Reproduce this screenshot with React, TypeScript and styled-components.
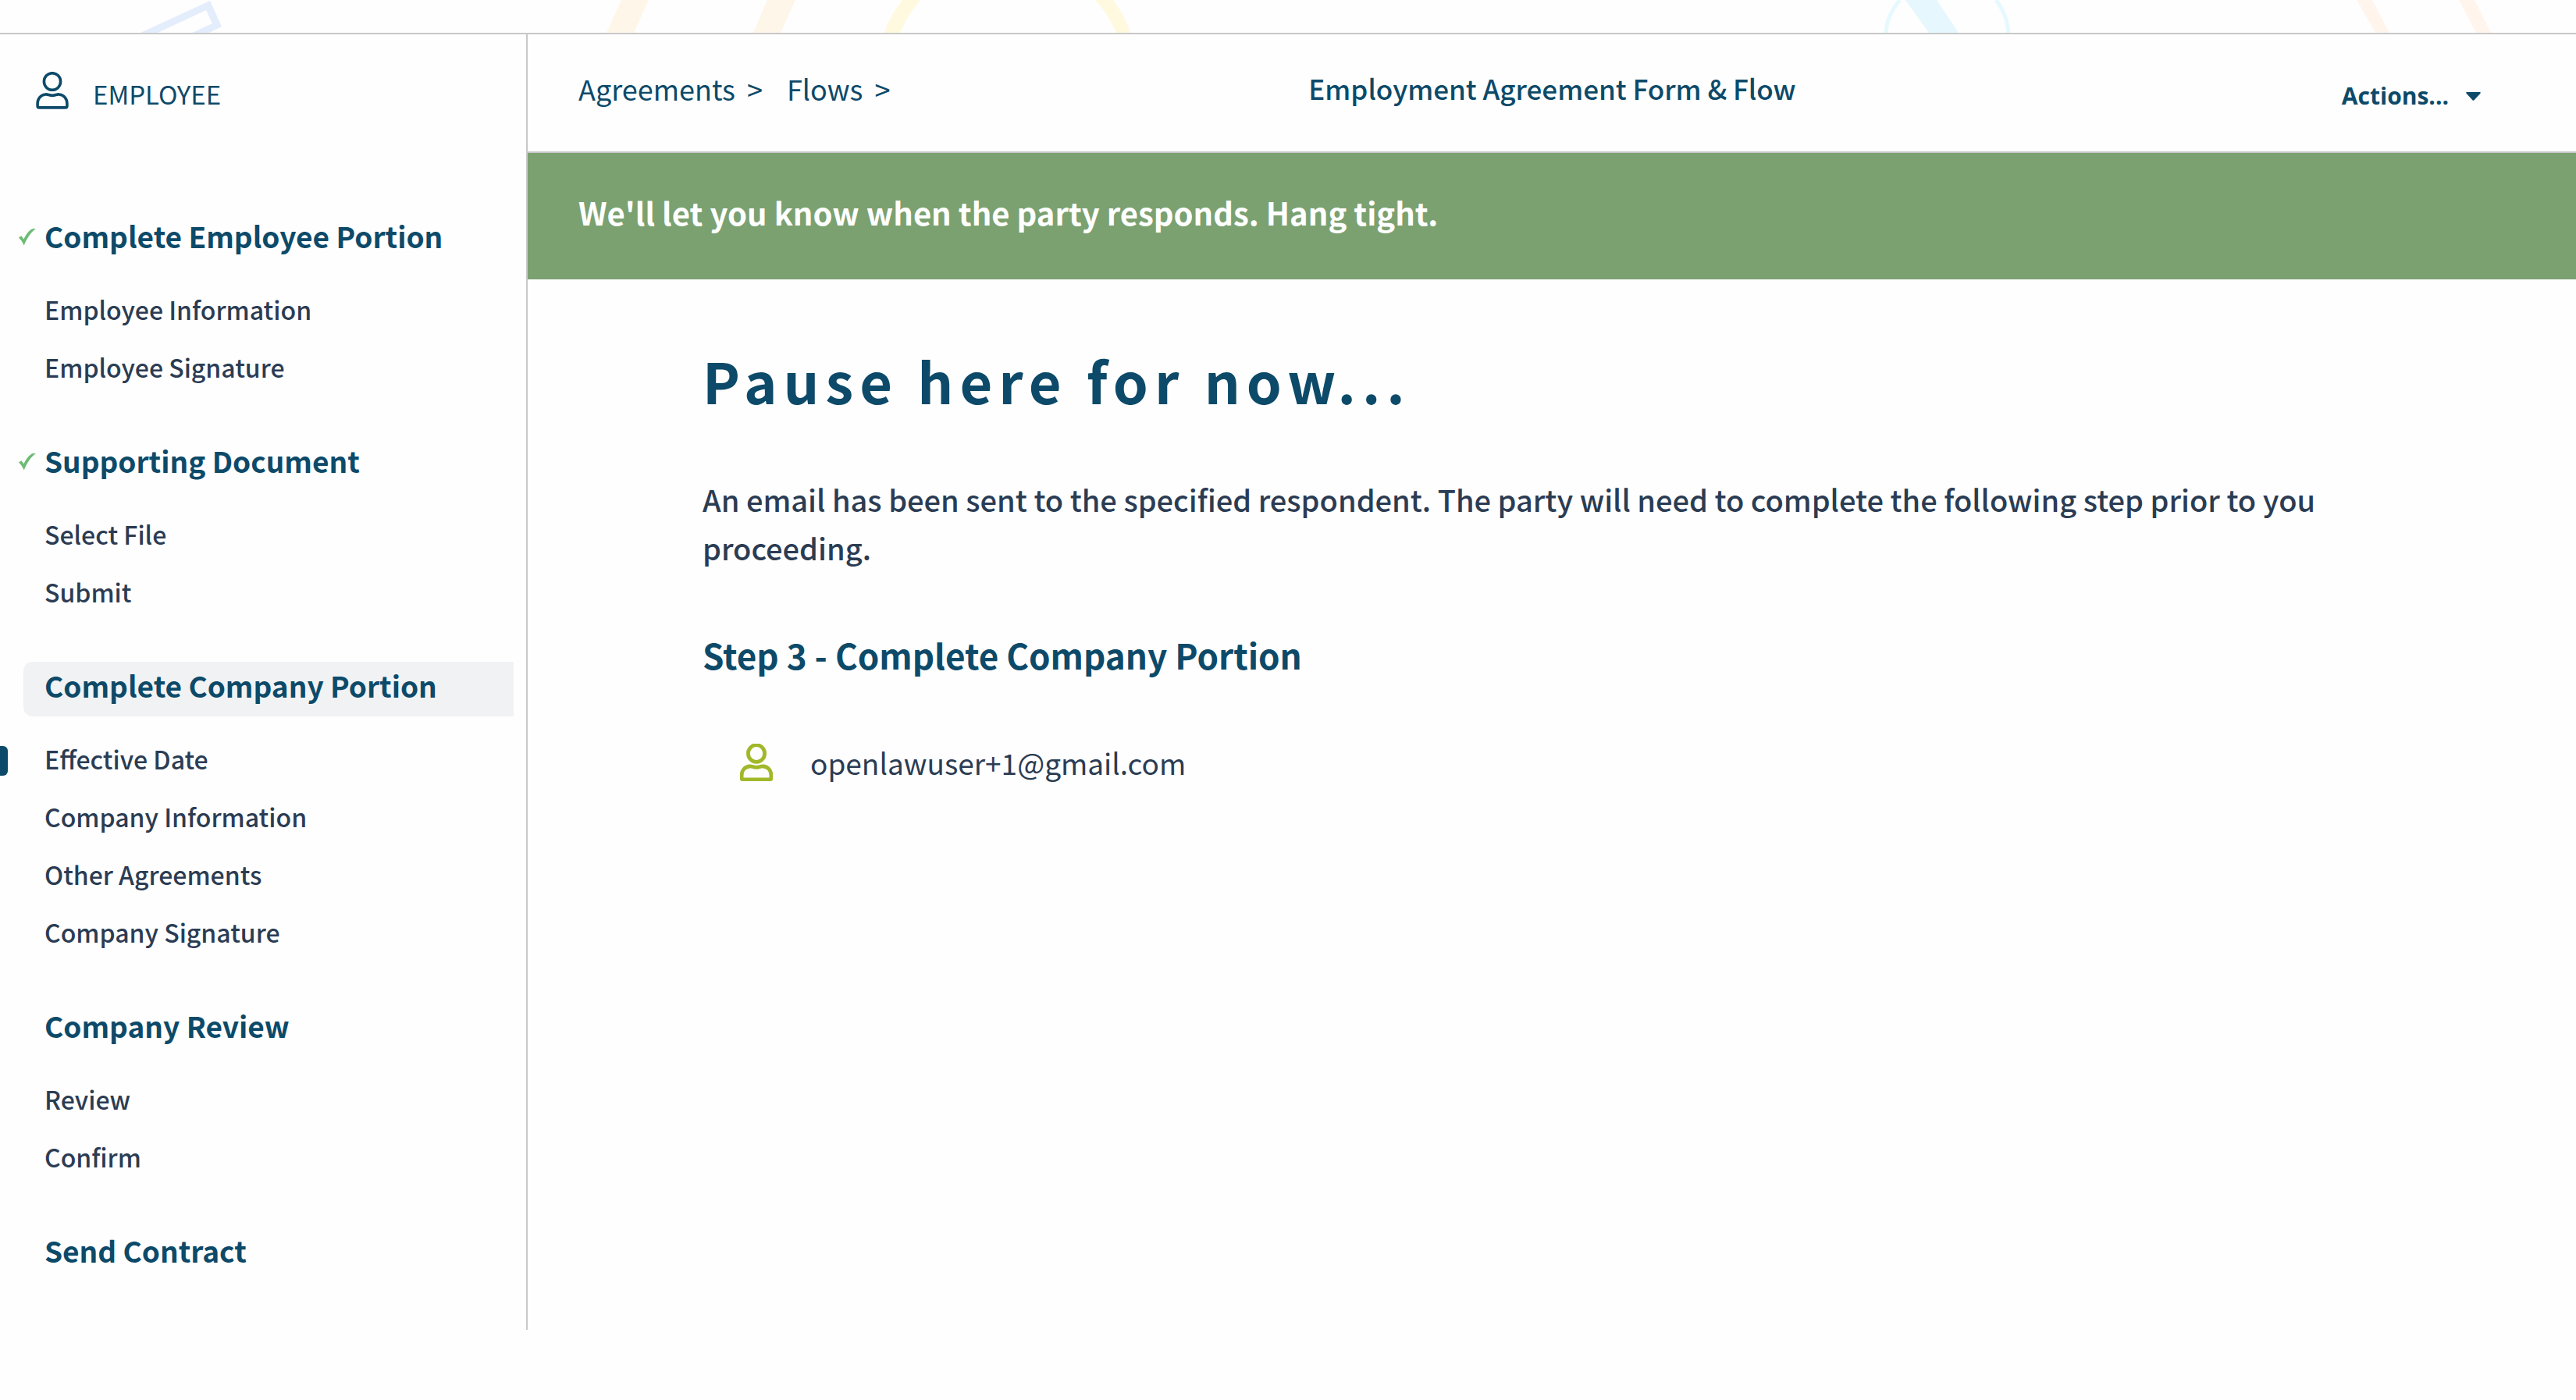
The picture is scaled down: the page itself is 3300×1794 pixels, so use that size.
import React from "react";
import styled, { createGlobalStyle } from "styled-components";

const navy = "#0d4a69";
const ink = "#2b3c53";
const line = "#c8c8c8";
const paper = "#fefefe";

const GlobalStyle = createGlobalStyle`
  *, *::before, *::after { box-sizing: border-box; }
  body {
    margin: 0;
    background: ${paper};
    color: ${ink};
    font-family: "Noto Sans CJK SC", "Noto Sans", sans-serif;
  }
  h1, h2, p, ul, ol { margin: 0; padding: 0; }
  ul, ol { list-style: none; }
  a { color: inherit; text-decoration: none; }
`;

const Page = styled.div`
  display: flex;
  flex-direction: column;
`;

const Strip = styled.div`
  height: 44px;
  overflow: hidden;
  border-bottom: 2px solid ${line};
`;

const StripArt = styled.svg`
  display: block;
  width: 3300px;
  height: 42px;
`;

const Columns = styled.div`
  display: grid;
  grid-template-columns: 676px minmax(0, 1fr);
  align-items: start;
`;

const Sidebar = styled.aside`
  padding: 48px 0 62px;
  border-right: 2px solid ${line};
`;

const Role = styled.div`
  display: flex;
  align-items: flex-start;
  gap: 31px;
  padding-left: 46px;
  margin-bottom: 124px;
  color: ${navy};
  font-size: 33px;
  line-height: 56px;
`;

const PersonSvg = styled.svg`
  flex: none;
  width: 42px;
  height: 48px;
`;

const Steps = styled.ol`
  display: flex;
  flex-direction: column;
  gap: 53px;
`;

const StepTitle = styled.h2<{ $current?: boolean }>`
  position: relative;
  margin: 0 16px 0 30px;
  padding: 0 0 10px 27px;
  border-radius: 12px 0 0 12px;
  background: ${(p) => (p.$current ? "#f1f2f4" : "transparent")};
  color: ${navy};
  font-size: 37px;
  font-weight: 700;
  line-height: 60px;
`;

const Tick = styled.svg`
  position: absolute;
  left: -6px;
  top: 21px;
  width: 22px;
  height: 22px;
`;

const Sections = styled.ul`
  padding-top: 17px;
`;

const Section = styled.li<{ $current?: boolean }>`
  position: relative;
  padding-left: 57px;
  font-size: 32px;
  font-weight: 500;
  line-height: 74px;

  &::before {
    content: "";
    display: ${(p) => (p.$current ? "block" : "none")};
    position: absolute;
    left: 0;
    top: 21px;
    width: 10px;
    height: 38px;
    border-radius: 0 6px 6px 0;
    background: ${navy};
  }
`;

const TopBar = styled.header`
  display: grid;
  grid-template-columns: 1fr auto 1fr;
  align-items: center;
  height: 152px;
  padding: 0 122px 12px 65px;
  border-bottom: 2px solid ${line};
  color: ${navy};
  font-size: 36px;
  line-height: 56px;
`;

const Crumbs = styled.nav`
  display: flex;
  gap: 31px;
`;

const Crumb = styled.span`
  display: flex;
  gap: 15px;
`;

const FlowName = styled.div`
  /* the side paddings differ, so the middle column is nudged back to centre */
  padding-left: 58px;
  font-size: 35px;
  font-weight: 500;
`;

const ActionsButton = styled.button`
  display: flex;
  align-items: center;
  justify-self: end;
  gap: 22px;
  padding: 20px 0 0;
  border: 0;
  background: none;
  color: ${navy};
  font-family: "Open Sans", "Noto Sans", sans-serif;
  font-size: 30px;
  font-weight: 700;
  line-height: 56px;
  cursor: pointer;
`;

const Caret = styled.svg`
  width: 19px;
  height: 11px;
`;

const Banner = styled.div`
  padding: 46px 65px 56px;
  background: #7ba171;
  color: #ffffff;
  font-size: 40px;
  font-weight: 700;
  line-height: 60px;
`;

const Content = styled.main`
  padding: 81px 224px;
`;

const Heading = styled.h1`
  color: ${navy};
  font-size: 72px;
  font-weight: 700;
  line-height: 96px;
  letter-spacing: 8px;
`;

const Message = styled.p`
  margin: 74px 0;
  font-size: 38px;
  font-weight: 500;
  line-height: 62px;
`;

const StepName = styled.h2`
  color: ${navy};
  font-size: 44px;
  font-weight: 700;
  line-height: 64px;
`;

const Respondent = styled.div`
  display: flex;
  align-items: center;
  gap: 48px;
  margin-top: 72px;
  padding-left: 48px;
  font-size: 37px;
  line-height: 68px;
`;

type PersonProps = { color: string; weight: number };

function Person({ color, weight }: PersonProps) {
  return (
    <PersonSvg viewBox="0 0 42 48" fill="none" stroke={color} strokeWidth={weight} strokeLinejoin="round" aria-hidden="true">
      <ellipse cx="21" cy="12.5" rx="10.6" ry="10.8" />
      <path d="M12 29c3-.6 5 1.400 9 1.400s6-2 9-1.400c6 .8 9.900 5.500 9.900 11.500v3.500c0 1.200-.9 1.900-2 1.900H4.100c-1.100 0-2-.7-2-1.900V40.500C2.100 34.500 6 29.800 12 29z" />
    </PersonSvg>
  );
}

const steps = [
  { title: "Complete Employee Portion", done: true, items: ["Employee Information", "Employee Signature"] },
  { title: "Supporting Document", done: true, items: ["Select File", "Submit"] },
  {
    title: "Complete Company Portion",
    current: true,
    items: ["Effective Date", "Company Information", "Other Agreements", "Company Signature"],
  },
  { title: "Company Review", items: ["Review", "Confirm"] },
  { title: "Send Contract", items: [] as string[] },
];

export default function App() {
  return (
    <>
      <GlobalStyle />
      <Page>
        <Strip>
          <StripArt viewBox="0 0 3300 42" aria-hidden="true">
            <path fill="#e4edfb" fillRule="evenodd" d="M180 42L269 1l15 33-16 8h-22l26-12-8-17-62 29z" />
            <path fill="#fff6ea" d="M796 0h35l-19 42h-35zM983 0h36l-19 42h-35z" />
            <path fill="#fff9df" d="M1156 0h23q-17 20-26 42h-20q7-22 23-42zM1403 0h23q15 20 22 42h-18q-9-22-27-42z" />
            <path fill="#e6f7fd" d="M2441 0h40l28 42h-38z" />
            <path fill="none" stroke="#e6f9fe" strokeWidth="5" d="M2434 0q-17 20-18 42M2557 0q15 20 16 42" />
            <path fill="#fff5ed" d="M3019 0h20l22 42h-18zM3150 0h20l21 42h-19z" />
          </StripArt>
        </Strip>
        <Columns>
          <Sidebar>
            <Role>
              <Person color={navy} weight={3.6} />
              <span>EMPLOYEE</span>
            </Role>
            <Steps>
              {steps.map((step) => (
                <li key={step.title}>
                  <StepTitle $current={step.current}>
                    {step.done && (
                      <Tick viewBox="0 0 22 22" aria-hidden="true">
                        <path fill="#6dbb74" d="M0 11.500l3.400-2.300 3 4.300C9.500 7 13.500 1.800 18 0h4C15.500 4.500 10.500 12 6.800 21.500 5 17.500 3 14.200 0 11.500z" />
                      </Tick>
                    )}
                    {step.title}
                  </StepTitle>
                  {step.items.length > 0 && (
                    <Sections>
                      {step.items.map((item, i) => (
                        <Section key={item} $current={step.current && i === 0}>
                          <a href="#">{item}</a>
                        </Section>
                      ))}
                    </Sections>
                  )}
                </li>
              ))}
            </Steps>
          </Sidebar>
          <div>
            <TopBar>
              <Crumbs>
                <Crumb>
                  <a href="#">Agreements</a>
                  <span>&gt;</span>
                </Crumb>
                <Crumb>
                  <a href="#">Flows</a>
                  <span>&gt;</span>
                </Crumb>
              </Crumbs>
              <FlowName>Employment Agreement Form &amp; Flow</FlowName>
              <ActionsButton type="button">
                Actions...
                <Caret viewBox="0 0 19 11" aria-hidden="true">
                  <path fill={navy} d="M1.200 0h16.600q1.600.4.600 1.800l-7.800 8.500q-1.100 1-2.200 0L.6 1.800Q-.4.400 1.200 0z" />
                </Caret>
              </ActionsButton>
            </TopBar>
            <Banner role="status">We'll let you know when the party responds. Hang tight.</Banner>
            <Content>
              <Heading>Pause here for now...</Heading>
              <Message>
                An email has been sent to the specified respondent. The party will need to complete the following step
                prior to you proceeding.
              </Message>
              <StepName>Step 3 - Complete Company Portion</StepName>
              <Respondent>
                <Person color="#a0b829" weight={4.8} />
                <span>openlawuser+1@gmail.com</span>
              </Respondent>
            </Content>
          </div>
        </Columns>
      </Page>
    </>
  );
}
